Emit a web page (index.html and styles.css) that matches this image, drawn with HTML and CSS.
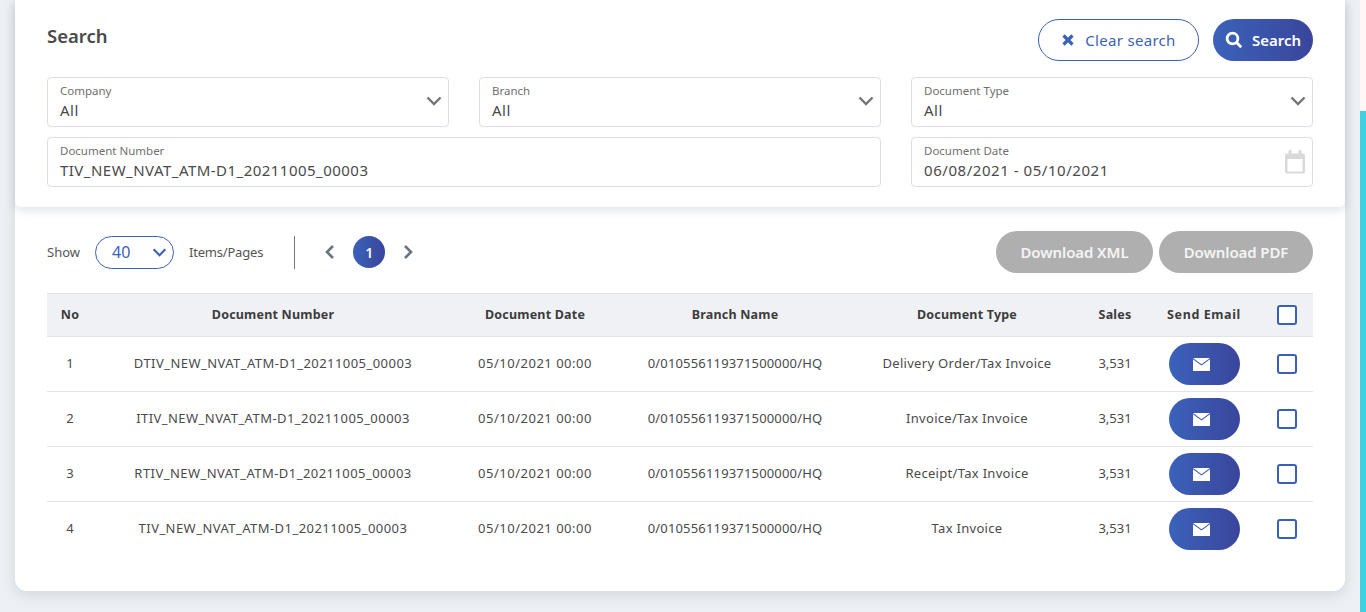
FILE: index.html
```html
<!DOCTYPE html>
<html>
<head>
	<meta charset="utf-8" />
	<title>Search documents</title>
	<link rel="stylesheet" href="styles.css">
</head>
<body>
<div class="page">
	<div class="card">
		<div class="search-panel">
			<div class="search-head">
				<h2 class="search-title">Search</h2>
				<div class="search-actions">
					<a href="#" class="btn btn-outline">
						<svg class="ico-x" viewBox="0 0 14 14"><path d="M2.5 2.5l9 9M11.5 2.5l-9 9"/></svg>
						Clear search
					</a>
					<a href="#" class="btn btn-primary">
						<svg class="ico-search" viewBox="0 0 18 18"><circle cx="7.5" cy="7.5" r="5.4"/><path d="M11.6 11.6l4.6 4.6"/></svg>
						Search
					</a>
				</div>
			</div>
			<div class="fields">
				<div class="field">
					<label>Company</label>
					<div class="value">All</div>
					<svg class="ico-chev" viewBox="0 0 16 10"><path d="M1.5 1.5L8 8l6.5-6.5"/></svg>
				</div>
				<div class="field">
					<label>Branch</label>
					<div class="value">All</div>
					<svg class="ico-chev" viewBox="0 0 16 10"><path d="M1.5 1.5L8 8l6.5-6.5"/></svg>
				</div>
				<div class="field">
					<label>Document Type</label>
					<div class="value">All</div>
					<svg class="ico-chev" viewBox="0 0 16 10"><path d="M1.5 1.5L8 8l6.5-6.5"/></svg>
				</div>
				<div class="field field-wide">
					<label>Document Number</label>
					<div class="value">TIV_NEW_NVAT_ATM-D1_20211005_00003</div>
				</div>
				<div class="field">
					<label>Document Date</label>
					<div class="value value-date">06/08/2021 - 05/10/2021</div>
					<svg class="ico-cal" viewBox="0 0 22 24"><path d="M1 5.5a2 2 0 0 1 2-2h16a2 2 0 0 1 2 2v16a2 2 0 0 1-2 2H3a2 2 0 0 1-2-2z M3.5 9v12.5h15V9z" fill-rule="evenodd"/><rect x="4.5" y="0" width="3" height="5" rx="1"/><rect x="14.5" y="0" width="3" height="5" rx="1"/></svg>
				</div>
			</div>
		</div>

		<div class="result">
			<div class="toolbar">
				<span class="small-text">Show</span>
				<div class="page-size">
					<span>40</span>
					<svg viewBox="0 0 16 10"><path d="M1.5 1.5L8 8l6.5-6.5"/></svg>
				</div>
				<span class="small-text items-text">Items/Pages</span>
				<div class="divider"></div>
				<div class="pager">
					<svg class="pager-arrow" viewBox="0 0 10 16"><path d="M8 2L2 8l6 6"/></svg>
					<span class="pager-num">1</span>
					<svg class="pager-arrow" viewBox="0 0 10 16"><path d="M2 2l6 6-6 6"/></svg>
				</div>
				<div class="downloads">
					<a href="#" class="btn btn-grey btn-xml">Download XML</a>
					<a href="#" class="btn btn-grey btn-pdf">Download PDF</a>
				</div>
			</div>

			<table class="doc-table">
				<thead>
					<tr>
						<th class="c-no">No</th>
						<th class="c-num">Document Number</th>
						<th class="c-date">Document Date</th>
						<th class="c-branch">Branch Name</th>
						<th class="c-type">Document Type</th>
						<th class="c-sales">Sales</th>
						<th class="c-mail">Send Email</th>
						<th class="c-check"><span class="check"></span></th>
					</tr>
				</thead>
				<tbody>
					<tr>
						<td>1</td>
						<td class="t-num">DTIV_NEW_NVAT_ATM-D1_20211005_00003</td>
						<td class="t-date">05/10/2021 00:00</td>
						<td class="t-branch">0/010556119371500000/HQ</td>
						<td class="t-type">Delivery Order/Tax Invoice</td>
						<td>3,531</td>
						<td class="t-btn"><a href="#" class="mail-btn"><svg viewBox="0 0 17 13"><path class="env" d="M0 0h17L8.5 6.2z"/><path class="env" d="M0 1.2v11.8h17V1.2L8.5 7.4z"/></svg></a></td>
						<td class="t-btn t-check"><span class="check"></span></td>
					</tr>
					<tr>
						<td>2</td>
						<td class="t-num">ITIV_NEW_NVAT_ATM-D1_20211005_00003</td>
						<td class="t-date">05/10/2021 00:00</td>
						<td class="t-branch">0/010556119371500000/HQ</td>
						<td class="t-type">Invoice/Tax Invoice</td>
						<td>3,531</td>
						<td class="t-btn"><a href="#" class="mail-btn"><svg viewBox="0 0 17 13"><path class="env" d="M0 0h17L8.5 6.2z"/><path class="env" d="M0 1.2v11.8h17V1.2L8.5 7.4z"/></svg></a></td>
						<td class="t-btn t-check"><span class="check"></span></td>
					</tr>
					<tr>
						<td>3</td>
						<td class="t-num">RTIV_NEW_NVAT_ATM-D1_20211005_00003</td>
						<td class="t-date">05/10/2021 00:00</td>
						<td class="t-branch">0/010556119371500000/HQ</td>
						<td class="t-type">Receipt/Tax Invoice</td>
						<td>3,531</td>
						<td class="t-btn"><a href="#" class="mail-btn"><svg viewBox="0 0 17 13"><path class="env" d="M0 0h17L8.5 6.2z"/><path class="env" d="M0 1.2v11.8h17V1.2L8.5 7.4z"/></svg></a></td>
						<td class="t-btn t-check"><span class="check"></span></td>
					</tr>
					<tr>
						<td>4</td>
						<td class="t-num">TIV_NEW_NVAT_ATM-D1_20211005_00003</td>
						<td class="t-date">05/10/2021 00:00</td>
						<td class="t-branch">0/010556119371500000/HQ</td>
						<td class="t-type">Tax Invoice</td>
						<td>3,531</td>
						<td class="t-btn"><a href="#" class="mail-btn"><svg viewBox="0 0 17 13"><path class="env" d="M0 0h17L8.5 6.2z"/><path class="env" d="M0 1.2v11.8h17V1.2L8.5 7.4z"/></svg></a></td>
						<td class="t-btn t-check"><span class="check"></span></td>
					</tr>
				</tbody>
			</table>
		</div>
	</div>
	<div class="side">
		<div class="side-top"></div>
		<div class="side-bar"></div>
	</div>
</div>
</body>
</html>
```

FILE: styles.css
```css
*{
margin:0;
padding:0;
box-sizing:border-box;
}
html,body{
height:612px;
overflow:hidden;
}
body{
background:#edf0f4;
font-family:"Noto Sans","Liberation Sans",sans-serif;
color:#4a4a4a;
}
a{
text-decoration:none;
}
svg{
display:block;
fill:none;
}

.page{
height:612px;
display:flex;
padding-left:15px;
}
.card{
width:1330px;
height:591px;
background:#fff;
border-radius:0 0 12px 12px;
box-shadow:0 4px 14px rgba(90,100,120,.18);
}
.side{
width:6px;
margin-left:15px;
display:flex;
flex-direction:column;
}
.side-top{
height:111px;
background:#fff7f7;
}
.side-bar{
flex:1;
background:#3dd2e3;
}

/* search */
.search-panel{
height:207px;
padding:19px 32px 0 32px;
border-radius:0 0 6px 6px;
box-shadow:0 3px 10px rgba(90,100,120,.2);
}
.search-head{
height:42px;
display:flex;
justify-content:space-between;
}
.search-title{
font-size:18.5px;
font-weight:600;
line-height:34px;
color:#4a4a4a;
}
.search-actions{
display:flex;
gap:14px;
}
.btn{
height:42px;
border-radius:21px;
display:flex;
align-items:center;
justify-content:center;
font-size:15px;
font-weight:600;
}
.btn-outline{
width:161px;
gap:10px;
border:1px solid #3a62b8;
color:#3a62b8;
font-weight:400;
letter-spacing:.3px;
}
.btn-primary{
width:100px;
gap:9px;
color:#fff;
background:linear-gradient(90deg,#3b62b9,#3a459c);
}
.ico-x{
width:14px;
height:14px;
stroke:#3a62b8;
stroke-width:3.2;
}
.ico-search{
width:18px;
height:18px;
stroke:#fff;
stroke-width:2.8;
}

.fields{
margin-top:16px;
display:grid;
grid-template-columns:402px 402px 402px;
column-gap:30px;
row-gap:10px;
}
.field{
height:50px;
position:relative;
border:1px solid #dcdde6;
border-radius:4px;
padding:5px 12px 0 12px;
}
.field-wide{
grid-column:span 2;
}
.field label{
display:block;
font-size:11.5px;
line-height:16px;
color:#6f6f6f;
}
.value{
font-size:15px;
line-height:22px;
color:#4a4a4a;
letter-spacing:.47px;
}
.value-date{
letter-spacing:.55px;
}
.ico-chev{
position:absolute;
right:6px;
top:18px;
width:16px;
height:10px;
stroke:#757575;
stroke-width:2.4;
}
.ico-cal{
position:absolute;
right:6px;
top:12px;
width:22px;
height:24px;
fill:#d9d9d9;
}

/* toolbar */
.result{
padding:24px 32px 0 32px;
}
.toolbar{
height:42px;
display:flex;
align-items:center;
}
.small-text{
font-size:13px;
color:#555;
}
.items-text{
letter-spacing:-.2px;
}
.page-size{
width:79px;
height:33px;
margin:0 15px;
border:1px solid #3a62b8;
border-radius:17px;
display:flex;
align-items:center;
justify-content:space-between;
padding:0 6px 0 16px;
color:#3a62b8;
font-size:16px;
}
.page-size svg{
width:15px;
height:9px;
stroke:#3a62b8;
stroke-width:2.4;
}
.divider{
width:1px;
height:33px;
background:#777;
margin-left:31px;
}
.pager{
display:flex;
align-items:center;
gap:18px;
margin-left:30px;
}
.pager-arrow{
width:10px;
height:16px;
stroke:#6b7280;
stroke-width:2.6;
}
.pager-num{
width:32px;
height:32px;
border-radius:50%;
display:flex;
align-items:center;
justify-content:center;
color:#fff;
font-size:14px;
font-weight:600;
background:linear-gradient(90deg,#3b62b9,#3a459c);
}
.downloads{
margin-left:auto;
display:flex;
gap:6px;
}
.btn-grey{
background:#afafaf;
color:#f4f4f4;
letter-spacing:-.1px;
}
.btn-xml{
width:157px;
}
.btn-pdf{
width:154px;
}

/* table */
.doc-table{
width:1266px;
margin-top:20px;
border-collapse:collapse;
table-layout:fixed;
font-size:13px;
}
.doc-table th{
height:43px;
background:#f0f1f5;
border-top:1px solid #e2e3e8;
border-bottom:1px solid #e2e3e8;
font-weight:700;
color:#3c3c3c;
font-size:12.5px;
letter-spacing:.2px;
padding-bottom:2px;
}
.doc-table .c-mail{
letter-spacing:.6px;
}
.doc-table td{
height:55px;
text-align:center;
color:#4a4a4a;
border-bottom:1px solid #e2e3e8;
padding-bottom:2px;
}
.doc-table tbody tr:last-child td{
border-bottom:0;
}
.doc-table .c-check{
padding:0 0 0 2px;
}
.doc-table .t-btn{
padding:0;
}
.doc-table .t-check{
padding-left:2px;
}
.t-num{
letter-spacing:.45px;
}
.t-date{
letter-spacing:.5px;
}
.t-branch{
letter-spacing:.17px;
}
.t-type{
letter-spacing:.3px;
}
.c-no{width:46px;}
.c-num{width:360px;}
.c-date{width:164px;}
.c-branch{width:236px;}
.c-type{width:228px;}
.c-sales{width:68px;}
.c-mail{width:110px;}
.c-check{width:54px;}

.mail-btn{
width:71px;
height:42px;
margin:0 auto;
padding-right:6px;
border-radius:21px;
display:flex;
align-items:center;
justify-content:center;
background:linear-gradient(90deg,#3b62b9,#3a459c);
}
.mail-btn svg{
width:17px;
height:13px;
}
.env{
fill:#fff;
}
.check{
display:block;
width:20px;
height:20px;
margin:0 auto;
border:2px solid #3a5fb8;
border-radius:3px;
background:#fff;
}
```
